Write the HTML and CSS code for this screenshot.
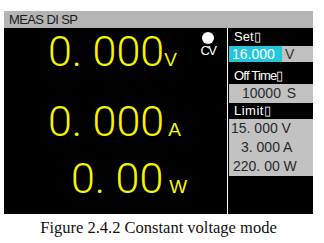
FILE: index.html
```html
<!DOCTYPE html>
<html>
<head>
<meta charset="utf-8">
<link rel="stylesheet" href="styles.css">
</head>
<body>
<div class="screen">
  <div class="title">MEAS DI SP</div>
  <div class="main">
    <div class="meas">
      <div class="cv"><span class="dot"></span><span class="cv-text">CV</span></div>
      <div class="row r1"><span class="num">0. 000</span><span class="unit">V</span></div>
      <div class="row r2"><span class="num">0. 000</span><span class="unit">A</span></div>
      <div class="row r3"><span class="num">0. 00</span><span class="unit">W</span></div>
    </div>
    <div class="panel">
      <div class="label l-set">Set▯</div>
      <div class="setrow"><span class="cyan">16.000</span><span class="setunit">V</span></div>
      <div class="label l-off">Off Time▯</div>
      <div class="gray g-off">10000 S</div>
      <div class="label l-lim">Limit▯</div>
      <div class="gray lim lim1">15. 000 V</div>
      <div class="gray lim lim2">3. 000 A</div>
      <div class="gray lim lim3">220. 00 W</div>
    </div>
  </div>
</div>
<p class="caption">Figure 2.4.2 Constant voltage mode</p>
</body>
</html>
```
FILE: styles.css
```css
body {
  margin: 0;
  background: #fff;
  font-family: "Liberation Sans", Arial, sans-serif;
}
.screen {
  margin: 11px 0 0 4px;
  width: 309px;
  height: 203px;
  background: #000;
  display: flex;
  flex-direction: column;
}
.title {
  height: 17px;
  flex: none;
  background: #b4b4b4;
  color: #1a1a1a;
  font-size: 13px;
  line-height: 17px;
  padding-left: 5px;
  letter-spacing: -0.6px;
}
.main {
  flex: 1;
  display: flex;
}
.meas {
  width: 223px;
  position: relative;
  border-right: 1px solid #fff;
  display: flex;
  flex-direction: column;
}
.row {
  display: flex;
  align-items: baseline;
  height: 42px;
  line-height: 42px;
  color: #f5f500;
}
.num {
  font-family: Roboto, "Liberation Sans", sans-serif;
  font-weight: 300;
  font-size: 43px;
}
.unit {
  font-size: 19px;
}
.r1 { margin-top: 2px; padding-left: 44px; }
.r2 { margin-top: 28px; padding-left: 44px; }
.r2 .unit { margin-left: 4px; }
.r3 { margin-top: 15px; padding-left: 67px; }
.r3 .unit { margin-left: 6px; }
.cv {
  position: absolute;
  left: 194px;
  top: 4px;
  width: 20px;
  display: flex;
  flex-direction: column;
  align-items: center;
}
.dot {
  width: 12px;
  height: 12px;
  border-radius: 50%;
  background: #fff;
}
.cv-text {
  color: #fff;
  font-size: 13px;
  line-height: 13px;
  letter-spacing: -1.5px;
  margin-top: 0;
}
.panel {
  width: 84px;
  padding-left: 1px;
  display: flex;
  flex-direction: column;
}
.label {
  color: #fff;
  font-size: 12px;
  padding-left: 5px;
}
.l-set { height: 18px; line-height: 18px; font-size: 13px; }
.l-off { height: 16px; line-height: 16px; padding-top: 6px; letter-spacing: -0.8px; font-size: 13px; }
.l-lim { height: 16px; line-height: 16px; letter-spacing: 0.5px; font-size: 13px; }
.setrow {
  display: flex;
  height: 16px;
  line-height: 16px;
  font-size: 14px;
}
.cyan {
  width: 50px;
  padding-left: 3px;
  background: #22c8d8;
  color: #fff;
}
.setunit {
  flex: 1;
  background: #c0c0c0;
  color: #333;
  padding-left: 3px;
}
.gray {
  background: #c2c2c2;
  color: #2a2a2a;
  font-size: 14px;
  height: 19px;
  line-height: 19px;
}
.g-off { padding-left: 13px; word-spacing: 2px; }
.lim1 { padding-left: 2px; }
.lim2 { padding-left: 12px; }
.lim3 { padding-left: 4px; }
.caption {
  margin: 4px 0 0 4px;
  width: 309px;
  text-align: center;
  font-family: "Liberation Serif", "Times New Roman", serif;
  font-size: 16.5px;
  line-height: 20px;
  color: #111;
}
```
